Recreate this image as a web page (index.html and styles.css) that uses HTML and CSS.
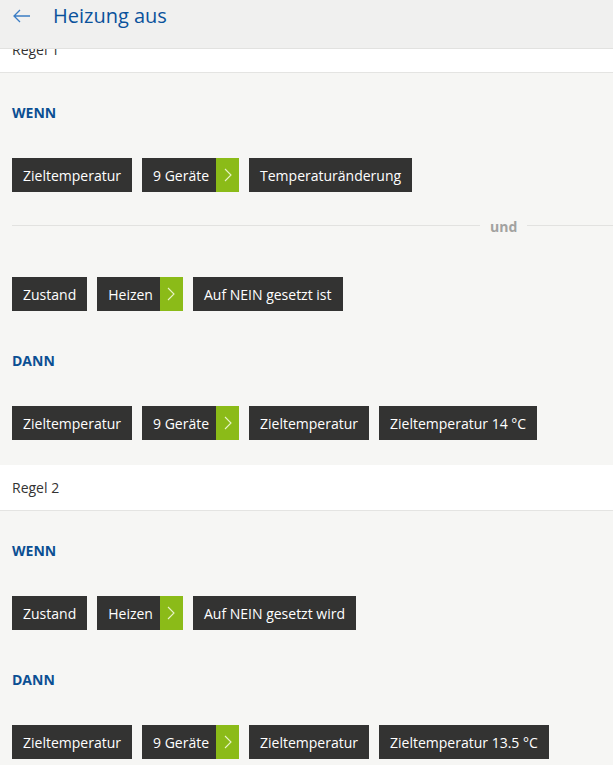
FILE: index.html
```html
<!DOCTYPE html>
<html lang="de">
<head>
<meta charset="utf-8">
<title>Heizung aus</title>
<link rel="stylesheet" href="styles.css">
</head>
<body>
<header class="topbar">
  <span class="back">
    <svg width="18" height="14" viewBox="0 0 18 14"><path d="M7 1 L1 7 L7 13 M1 7 H17" fill="none" stroke="#3a7cc4" stroke-width="1.3"/></svg>
  </span>
  <h1 class="title">Heizung aus</h1>
</header>
<main class="content">
  <section class="rule">
    <div class="rule-head">Regel 1</div>
    <div class="rule-body">
      <div class="label">WENN</div>
      <div class="chips">
        <span class="chip">Zieltemperatur</span>
        <span class="chip chip-arrow">9 Geräte<span class="arrow"><svg width="8" height="14" viewBox="0 0 8 14"><path d="M1 1 L7 7 L1 13" fill="none" stroke="#e8f3c8" stroke-width="1.1"/></svg></span></span>
        <span class="chip">Temperaturänderung</span>
      </div>
      <div class="sep"><span class="line line-left"></span><span class="sep-text">und</span><span class="line"></span></div>
      <div class="chips">
        <span class="chip">Zustand</span>
        <span class="chip chip-arrow">Heizen<span class="arrow"><svg width="8" height="14" viewBox="0 0 8 14"><path d="M1 1 L7 7 L1 13" fill="none" stroke="#e8f3c8" stroke-width="1.1"/></svg></span></span>
        <span class="chip">Auf NEIN gesetzt ist</span>
      </div>
      <div class="label label-then">DANN</div>
      <div class="chips">
        <span class="chip">Zieltemperatur</span>
        <span class="chip chip-arrow">9 Geräte<span class="arrow"><svg width="8" height="14" viewBox="0 0 8 14"><path d="M1 1 L7 7 L1 13" fill="none" stroke="#e8f3c8" stroke-width="1.1"/></svg></span></span>
        <span class="chip">Zieltemperatur</span>
        <span class="chip">Zieltemperatur 14 °C</span>
      </div>
    </div>
  </section>
  <section class="rule">
    <div class="rule-head">Regel 2</div>
    <div class="rule-body">
      <div class="label">WENN</div>
      <div class="chips">
        <span class="chip">Zustand</span>
        <span class="chip chip-arrow">Heizen<span class="arrow"><svg width="8" height="14" viewBox="0 0 8 14"><path d="M1 1 L7 7 L1 13" fill="none" stroke="#e8f3c8" stroke-width="1.1"/></svg></span></span>
        <span class="chip">Auf NEIN gesetzt wird</span>
      </div>
      <div class="label label-then">DANN</div>
      <div class="chips">
        <span class="chip">Zieltemperatur</span>
        <span class="chip chip-arrow">9 Geräte<span class="arrow"><svg width="8" height="14" viewBox="0 0 8 14"><path d="M1 1 L7 7 L1 13" fill="none" stroke="#e8f3c8" stroke-width="1.1"/></svg></span></span>
        <span class="chip">Zieltemperatur</span>
        <span class="chip">Zieltemperatur 13.5 °C</span>
      </div>
    </div>
  </section>
</main>
</body>
</html>
```
FILE: styles.css
```css
* { box-sizing: border-box; }
html, body { margin: 0; padding: 0; }
body {
  background: #f6f6f4;
  font-family: "Open Sans", "Liberation Sans", sans-serif;
  font-size: 14px;
  color: #333;
  width: 613px;
  height: 765px;
  overflow: hidden;
}
.topbar {
  position: fixed;
  top: 0; left: 0; right: 0;
  height: 49px;
  background: #f0f0ef;
  border-bottom: 1px solid #e2e2e0;
  display: flex;
  align-items: center;
  z-index: 10;
}
.back {
  display: flex;
  width: 53px;
  padding-left: 13px;
  margin-top: -17px;
}
.title {
  margin: 0;
  margin-top: -17px;
  font-weight: 400;
  font-size: 20px;
  color: #0a529c;
}
.content { padding-top: 27px; }
.rule-head {
  height: 46px;
  background: #fff;
  border-bottom: 1px solid #e4e4e2;
  padding-left: 12px;
  display: flex;
  align-items: center;
  color: #333;
}
.rule-body {
  padding: 30px 0 25px 12px;
}
.label {
  font-weight: 700;
  color: #0b4f93;
  line-height: 20px;
  height: 20px;
  margin-bottom: 35px;
}
.label-then { margin-top: 40px; }
.chips {
  display: flex;
  gap: 10px;
}
.chip {
  display: flex;
  align-items: center;
  height: 34px;
  background: #333332;
  color: #fff;
  padding: 0 11px;
  font-size: 14px;
}
.chip-arrow { padding-right: 0; }
.arrow {
  display: flex;
  align-items: center;
  justify-content: center;
  width: 23px;
  height: 34px;
  background: #8bbb18;
  margin-left: 7px;
}
.sep {
  display: flex;
  align-items: center;
  height: 85px;
  padding-bottom: 18px;
}
.line {
  flex: 1;
  height: 1px;
  background: #e2e2e0;
}
.line-left { flex: 0 0 468px; }
.sep-text {
  color: #a2a2a0;
  font-weight: 700;
  padding: 0 10px 0 10px;
  margin-top: 1px;
}
```
